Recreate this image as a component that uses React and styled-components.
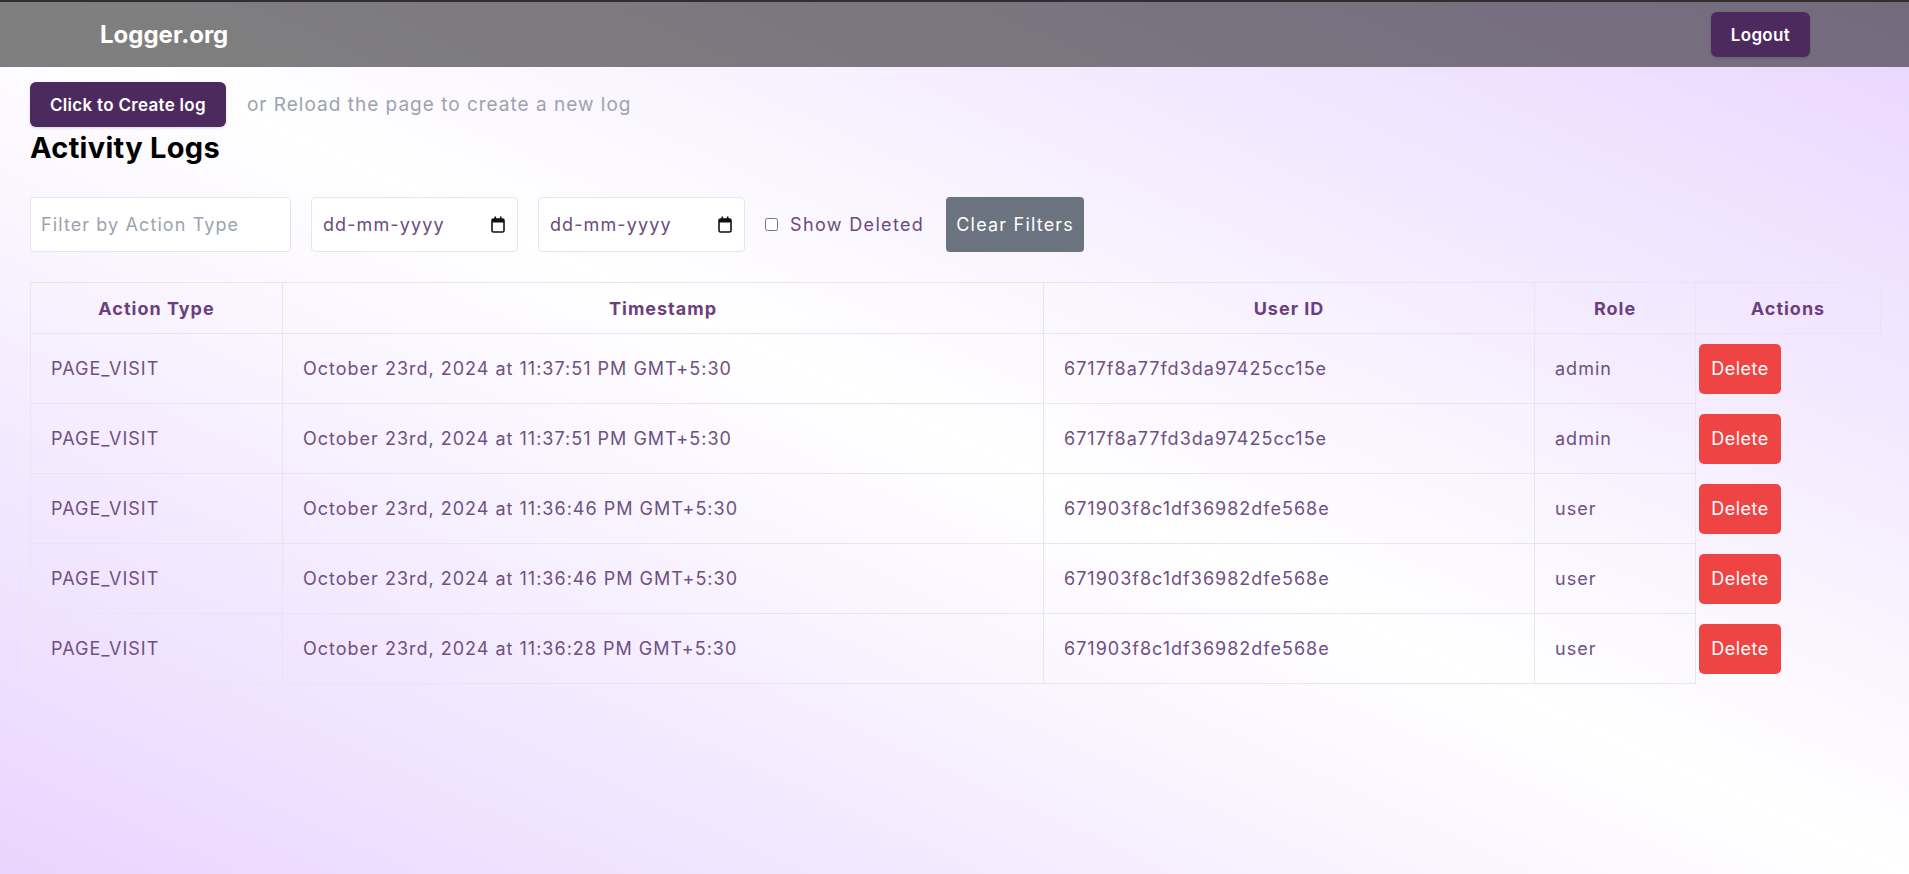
import React from 'react'
import styled, { createGlobalStyle } from 'styled-components'

const GlobalStyle = createGlobalStyle`
  html, body {
    margin: 0;
    padding: 0;
  }
  body {
    font-family: "Inter", "Open Sans", sans-serif;
    letter-spacing: 1px;
    min-height: 100vh;
    background: linear-gradient(to top right, #e9d5ff, #ffffff, #e9d5ff);
    background-attachment: fixed;
  }
  * { box-sizing: border-box; }
`

const logs = [
  { type: 'PAGE_VISIT', time: 'October 23rd, 2024 at 11:37:51 PM GMT+5:30', user: '6717f8a77fd3da97425cc15e', role: 'admin' },
  { type: 'PAGE_VISIT', time: 'October 23rd, 2024 at 11:37:51 PM GMT+5:30', user: '6717f8a77fd3da97425cc15e', role: 'admin' },
  { type: 'PAGE_VISIT', time: 'October 23rd, 2024 at 11:36:46 PM GMT+5:30', user: '671903f8c1df36982dfe568e', role: 'user' },
  { type: 'PAGE_VISIT', time: 'October 23rd, 2024 at 11:36:46 PM GMT+5:30', user: '671903f8c1df36982dfe568e', role: 'user' },
  { type: 'PAGE_VISIT', time: 'October 23rd, 2024 at 11:36:28 PM GMT+5:30', user: '671903f8c1df36982dfe568e', role: 'user' },
]

const columns = [
  { label: 'Action Type', width: 252 },
  { label: 'Timestamp', width: 761 },
  { label: 'User ID', width: 491 },
  { label: 'Role', width: 161 },
  { label: 'Actions', width: 185 },
]

function CalendarIcon() {
  return (
    <svg width="14" height="17" viewBox="0 0 14 17">
      <rect x="1" y="3" width="12" height="13" rx="1.5" fill="none" stroke="#111" strokeWidth="1.6" />
      <rect x="1" y="3" width="12" height="3.5" fill="#111" />
      <rect x="3.5" y="0.5" width="1.6" height="3.5" fill="#111" />
      <rect x="8.9" y="0.5" width="1.6" height="3.5" fill="#111" />
    </svg>
  )
}

export default function App() {
  return (
    <>
      <GlobalStyle />
      <Nav>
        <Logo>Logger.org</Logo>
        <PurpleButton>Logout</PurpleButton>
      </Nav>
      <Main>
        <CreateRow>
          <PurpleButton>Click to Create log</PurpleButton>
          <Hint>or Reload the page to create a new log</Hint>
        </CreateRow>
        <Title>Activity Logs</Title>
        <Filters>
          <TextInput placeholder="Filter by Action Type" />
          <DateBox>
            <span>dd-mm-yyyy</span>
            <CalendarIcon />
          </DateBox>
          <DateBox>
            <span>dd-mm-yyyy</span>
            <CalendarIcon />
          </DateBox>
          <CheckLabel>
            <input type="checkbox" />
            Show Deleted
          </CheckLabel>
          <ClearButton>Clear Filters</ClearButton>
        </Filters>
        <Table>
          <colgroup>
            {columns.map((c) => (
              <col key={c.label} style={{ width: c.width }} />
            ))}
          </colgroup>
          <thead>
            <tr>
              {columns.map((c) => (
                <Th key={c.label}>{c.label}</Th>
              ))}
            </tr>
          </thead>
          <tbody>
            {logs.map((log, i) => (
              <tr key={i}>
                <Td>{log.type}</Td>
                <Td>{log.time}</Td>
                <Td>{log.user}</Td>
                <Td>{log.role}</Td>
                <ActionTd>
                  <DeleteButton>Delete</DeleteButton>
                </ActionTd>
              </tr>
            ))}
          </tbody>
        </Table>
      </Main>
    </>
  )
}

const Nav = styled.nav`
  height: 67px;
  border-top: 2px solid #2f2f2f;
  background: rgba(0, 0, 0, 0.5);
  display: flex;
  align-items: center;
  justify-content: space-between;
  padding: 0 99px 0 100px;
`

const Logo = styled.div`
  color: #fff;
  font-weight: 700;
  font-size: 24px;
  letter-spacing: 0;
`

const PurpleButton = styled.button`
  border: none;
  background: #4d2a5e;
  color: #fff;
  font-family: inherit;
  font-weight: 600;
  font-size: 17px;
  letter-spacing: 0.3px;
  height: 45px;
  padding: 0 20px;
  border-radius: 6px;
  cursor: pointer;
  box-shadow: 0 1px 3px rgba(0, 0, 0, 0.15);
`

const Main = styled.main`
  padding: 15px 29px 40px 30px;
`

const CreateRow = styled.div`
  display: flex;
  align-items: center;
  gap: 21px;
`

const Hint = styled.span`
  color: #9ca3af;
  font-size: 19px;
`

const Title = styled.h1`
  margin: 4px 0 0;
  font-size: 29px;
  font-weight: 700;
  letter-spacing: 0.3px;
  color: #000;
  line-height: 34px;
`

const Filters = styled.div`
  display: flex;
  align-items: center;
  gap: 20px;
  margin-top: 32px;
`

const fieldBase = `
  height: 55px;
  background: #fff;
  border: 1px solid #e5e7eb;
  border-radius: 4px;
  font-family: inherit;
  font-size: 18px;
  letter-spacing: 1.1px;
`

const TextInput = styled.input`
  ${fieldBase}
  width: 261px;
  padding: 0 10px;
  outline: none;
  &::placeholder {
    color: #9ca3af;
  }
`

const DateBox = styled.div`
  ${fieldBase}
  width: 207px;
  padding: 0 12px 0 11px;
  display: flex;
  align-items: center;
  justify-content: space-between;
  color: #6b4a7e;
`

const CheckLabel = styled.label`
  display: flex;
  align-items: center;
  gap: 12px;
  color: #6b4a7e;
  font-size: 18px;
  letter-spacing: 1.35px;
  input {
    width: 13px;
    height: 13px;
    margin: 0;
  }
`

const ClearButton = styled.button`
  height: 55px;
  margin-left: 2px;
  padding: 0 10px;
  border: none;
  border-radius: 4px;
  background: #6b7280;
  color: #fff;
  font-family: inherit;
  font-size: 18px;
  letter-spacing: 1.2px;
  cursor: pointer;
`

const Table = styled.table`
  margin-top: 30px;
  width: 1850px;
  border-collapse: collapse;
  table-layout: fixed;
`

const Th = styled.th`
  height: 51px;
  border: 1px solid #e5e7eb;
  color: #6b3f7e;
  font-size: 18px;
  font-weight: 700;
  text-align: center;
`

const Td = styled.td`
  height: 70px;
  padding: 0 20px;
  border: 1px solid #e5e7eb;
  color: #6e5081;
  font-size: 18px;
  vertical-align: middle;
`

const ActionTd = styled.td`
  padding: 0 3px;
  vertical-align: middle;
`

const DeleteButton = styled.button`
  width: 82px;
  height: 50px;
  border: none;
  border-radius: 5px;
  background: #ef4444;
  color: #fff;
  font-family: inherit;
  font-size: 18px;
  letter-spacing: 0.5px;
  cursor: pointer;
`
